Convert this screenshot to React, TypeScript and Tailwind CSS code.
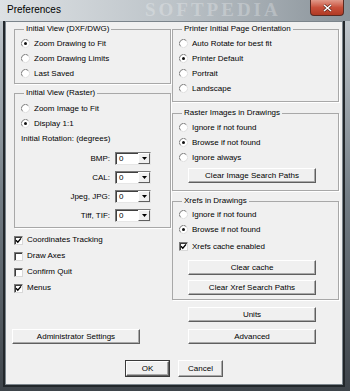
import type { ReactNode } from 'react';

const Radio = ({ checked }: { checked?: boolean }) => (
  <svg width="9" height="9" viewBox="0 0 9 9" className="shrink-0">
    <circle cx="4.5" cy="4.5" r="4" fill="#fff" />
    <path d="M1.6 7.4 A4 4 0 0 1 7.4 1.6" stroke="#7d7d7d" strokeWidth="1" fill="none" />
    <path d="M7.4 1.6 A4 4 0 0 1 1.6 7.4" stroke="#dedede" strokeWidth="1" fill="none" />
    {checked && <circle cx="4.5" cy="4.5" r="1.5" fill="#111" />}
  </svg>
);

const Check = ({ checked }: { checked?: boolean }) => (
  <span className="w-[9px] h-[9px] shrink-0 bg-white border border-t-[#7a7a7a] border-l-[#7a7a7a] border-r-[#d8d8d8] border-b-[#d8d8d8] shadow-[inset_1px_1px_0_#3c3c3c] flex items-center justify-center">
    {checked && (
      <svg width="7" height="7" viewBox="0 0 7 7">
        <path d="M1 3.3 L2.8 5.2 L6 1.4" stroke="#000" strokeWidth="1.4" fill="none" />
      </svg>
    )}
  </span>
);

const Option = ({ label, checked, box }: { label: string; checked?: boolean; box?: boolean }) => (
  <div className="flex items-center h-[15px] gap-[4px]">
    {box ? <Check checked={checked} /> : <Radio checked={checked} />}
    <span className="leading-[10px]">{label}</span>
  </div>
);

const Btn = ({ children, className = '' }: { children: ReactNode; className?: string }) => (
  <button
    type="button"
    className={`flex items-center justify-center bg-[#f0f0f0] border border-t-white border-l-white border-r-[#5f5f5f] border-b-[#5f5f5f] shadow-[inset_-1px_-1px_0_#a9a9a9] leading-[10px] ${className}`}
  >
    {children}
  </button>
);

const Group = ({ title, children, className = '' }: { title: string; children: ReactNode; className?: string }) => (
  <fieldset className={`border border-[#a8a8a8] shadow-[1px_1px_0_#fff] ${className}`}>
    <legend className="ml-[3px] px-[2px] leading-[10px]">{title}</legend>
    {children}
  </fieldset>
);

const Combo = ({ label, className = '' }: { label: string; className?: string }) => (
  <div className={`flex items-center ${className}`}>
    <span className="w-[89px] text-right leading-[10px]">{label}</span>
    <div className="ml-[5px] w-[36px] h-[13px] flex bg-white border border-t-[#7a7a7a] border-l-[#7a7a7a] border-r-[#e6e6e6] border-b-[#e6e6e6] shadow-[inset_1px_1px_0_#404040]">
      <span className="flex-1 pl-[3px] pt-[1px] leading-[10px]">0</span>
      <span className="w-[12px] h-full bg-[#f0f0f0] border border-t-white border-l-white border-r-[#5f5f5f] border-b-[#5f5f5f] flex items-center justify-center">
        <svg width="5" height="3" viewBox="0 0 5 3">
          <path d="M0 0 H5 L2.5 3 Z" fill="#000" />
        </svg>
      </span>
    </div>
  </div>
);

export default function App() {
  return (
    <div className="w-[350px] h-[391px] flex flex-col bg-gradient-to-b from-[#c9cfd4] via-[#737d85] to-[#3e444a] font-['Liberation_Sans',Arial,sans-serif] text-[8px] text-black select-none">
      {/* title bar */}
      <div className="relative h-[21px] shrink-0 overflow-hidden flex items-start bg-gradient-to-r from-[#dde1e4] via-[#bcc3c8] to-[#8a939a]">
        <span className="ml-[7px] mt-[4px] text-[10px] leading-[12px]">Preferences</span>
        <span className="absolute left-[145px] top-0 text-[19px] leading-[20px] font-bold tracking-[3px] text-white/25 font-['Liberation_Serif',serif]">
          SOFTPEDIA
        </span>
        <div className="relative ml-auto mr-[6px] w-[34px] h-[16px] rounded-b-[4px] border border-t-0 border-[#5a2a22] bg-gradient-to-b from-[#e0998a] via-[#c8503b] to-[#b03a24] flex items-center justify-center">
          <svg width="9" height="8" viewBox="0 0 9 8">
            <path d="M1 1 L8 7 M8 1 L1 7" stroke="#4a1c14" strokeWidth="2.6" />
            <path d="M1 1 L8 7 M8 1 L1 7" stroke="#fff" strokeWidth="1.6" />
          </svg>
        </div>
      </div>

      {/* client */}
      <div className="flex-1 ml-[5px] mr-[7px] mb-[6px] bg-[#f0f0f0] border border-[#7b848b] shadow-[0_0_0_2px_#22272b] flex flex-col">
        <div className="flex">
          {/* left column */}
          <div className="ml-[8px] w-[157px] flex flex-col">
            <Group title="Initial View (DXF/DWG)" className="mt-[2px] pl-[6px] pt-[2px] pb-[2px]">
              <Option label="Zoom Drawing to Fit" checked />
              <Option label="Zoom Drawing Limits" />
              <Option label="Last Saved" />
            </Group>

            <Group title="Initial View (Raster)" className="mt-[4px] pl-[6px] pt-[3px] pb-[5px]">
              <Option label="Zoom Image to Fit" />
              <Option label="Display 1:1" checked />
              <div className="h-[15px] flex items-center leading-[10px]">Initial Rotation: (degrees)</div>
              <Combo label="BMP:" className="mt-[6px]" />
              <Combo label="CAL:" className="mt-[6px]" />
              <Combo label="Jpeg, JPG:" className="mt-[6px]" />
              <Combo label="Tiff, TIF:" className="mt-[6px]" />
            </Group>

            <div className="mt-[4px] flex flex-col">
              <div className="h-[16px] flex items-center gap-[4px]"><Check checked /><span>Coordinates Tracking</span></div>
              <div className="h-[16px] flex items-center gap-[4px]"><Check /><span>Draw Axes</span></div>
              <div className="h-[16px] flex items-center gap-[4px]"><Check /><span>Confirm Quit</span></div>
              <div className="h-[16px] flex items-center gap-[4px]"><Check checked /><span>Menus</span></div>
            </div>

            <Btn className="mt-[33px] -ml-[2px] w-[128px] h-[15px]">Administrator Settings</Btn>
          </div>

          {/* right column */}
          <div className="ml-[1px] w-[167px] flex flex-col">
            <Group title="Printer Initial Page Orientation" className="mt-[2px] pl-[6px] pt-[2px] pb-[5px]">
              <Option label="Auto Rotate for best fit" />
              <Option label="Printer Default" checked />
              <Option label="Portrait" />
              <Option label="Landscape" />
            </Group>

            <Group title="Raster Images in Drawings" className="mt-[6px] pl-[6px] pt-[2px] pb-[7px]">
              <Option label="Ignore if not found" />
              <Option label="Browse if not found" checked />
              <Option label="Ignore always" />
              <Btn className="mt-[3px] ml-[9px] w-[128px] h-[15px]">Clear Image Search Paths</Btn>
            </Group>

            <Group title="Xrefs in Drawings" className="mt-[5px] pl-[6px] pt-[1px] pb-[4px]">
              <Option label="Ignore if not found" />
              <Option label="Browse if not found" checked />
              <div className="mt-[2px]">
                <Option label="Xrefs cache enabled" checked box />
              </div>
              <Btn className="mt-[6px] ml-[9px] w-[128px] h-[15px]">Clear cache</Btn>
              <Btn className="mt-[5px] ml-[9px] w-[128px] h-[15px]">Clear Xref Search Paths</Btn>
            </Group>

            <Btn className="mt-[7px] ml-[16px] w-[128px] h-[15px]">Units</Btn>
            <Btn className="mt-[7px] ml-[16px] w-[128px] h-[15px]">Advanced</Btn>
          </div>
        </div>

        <div className="mt-auto mb-[7px] flex justify-center gap-[8px]">
          <div className="border border-[#3a3a3a]">
            <Btn className="w-[43px] h-[15px]">OK</Btn>
          </div>
          <Btn className="w-[45px] h-[17px]">Cancel</Btn>
        </div>
      </div>
    </div>
  );
}
